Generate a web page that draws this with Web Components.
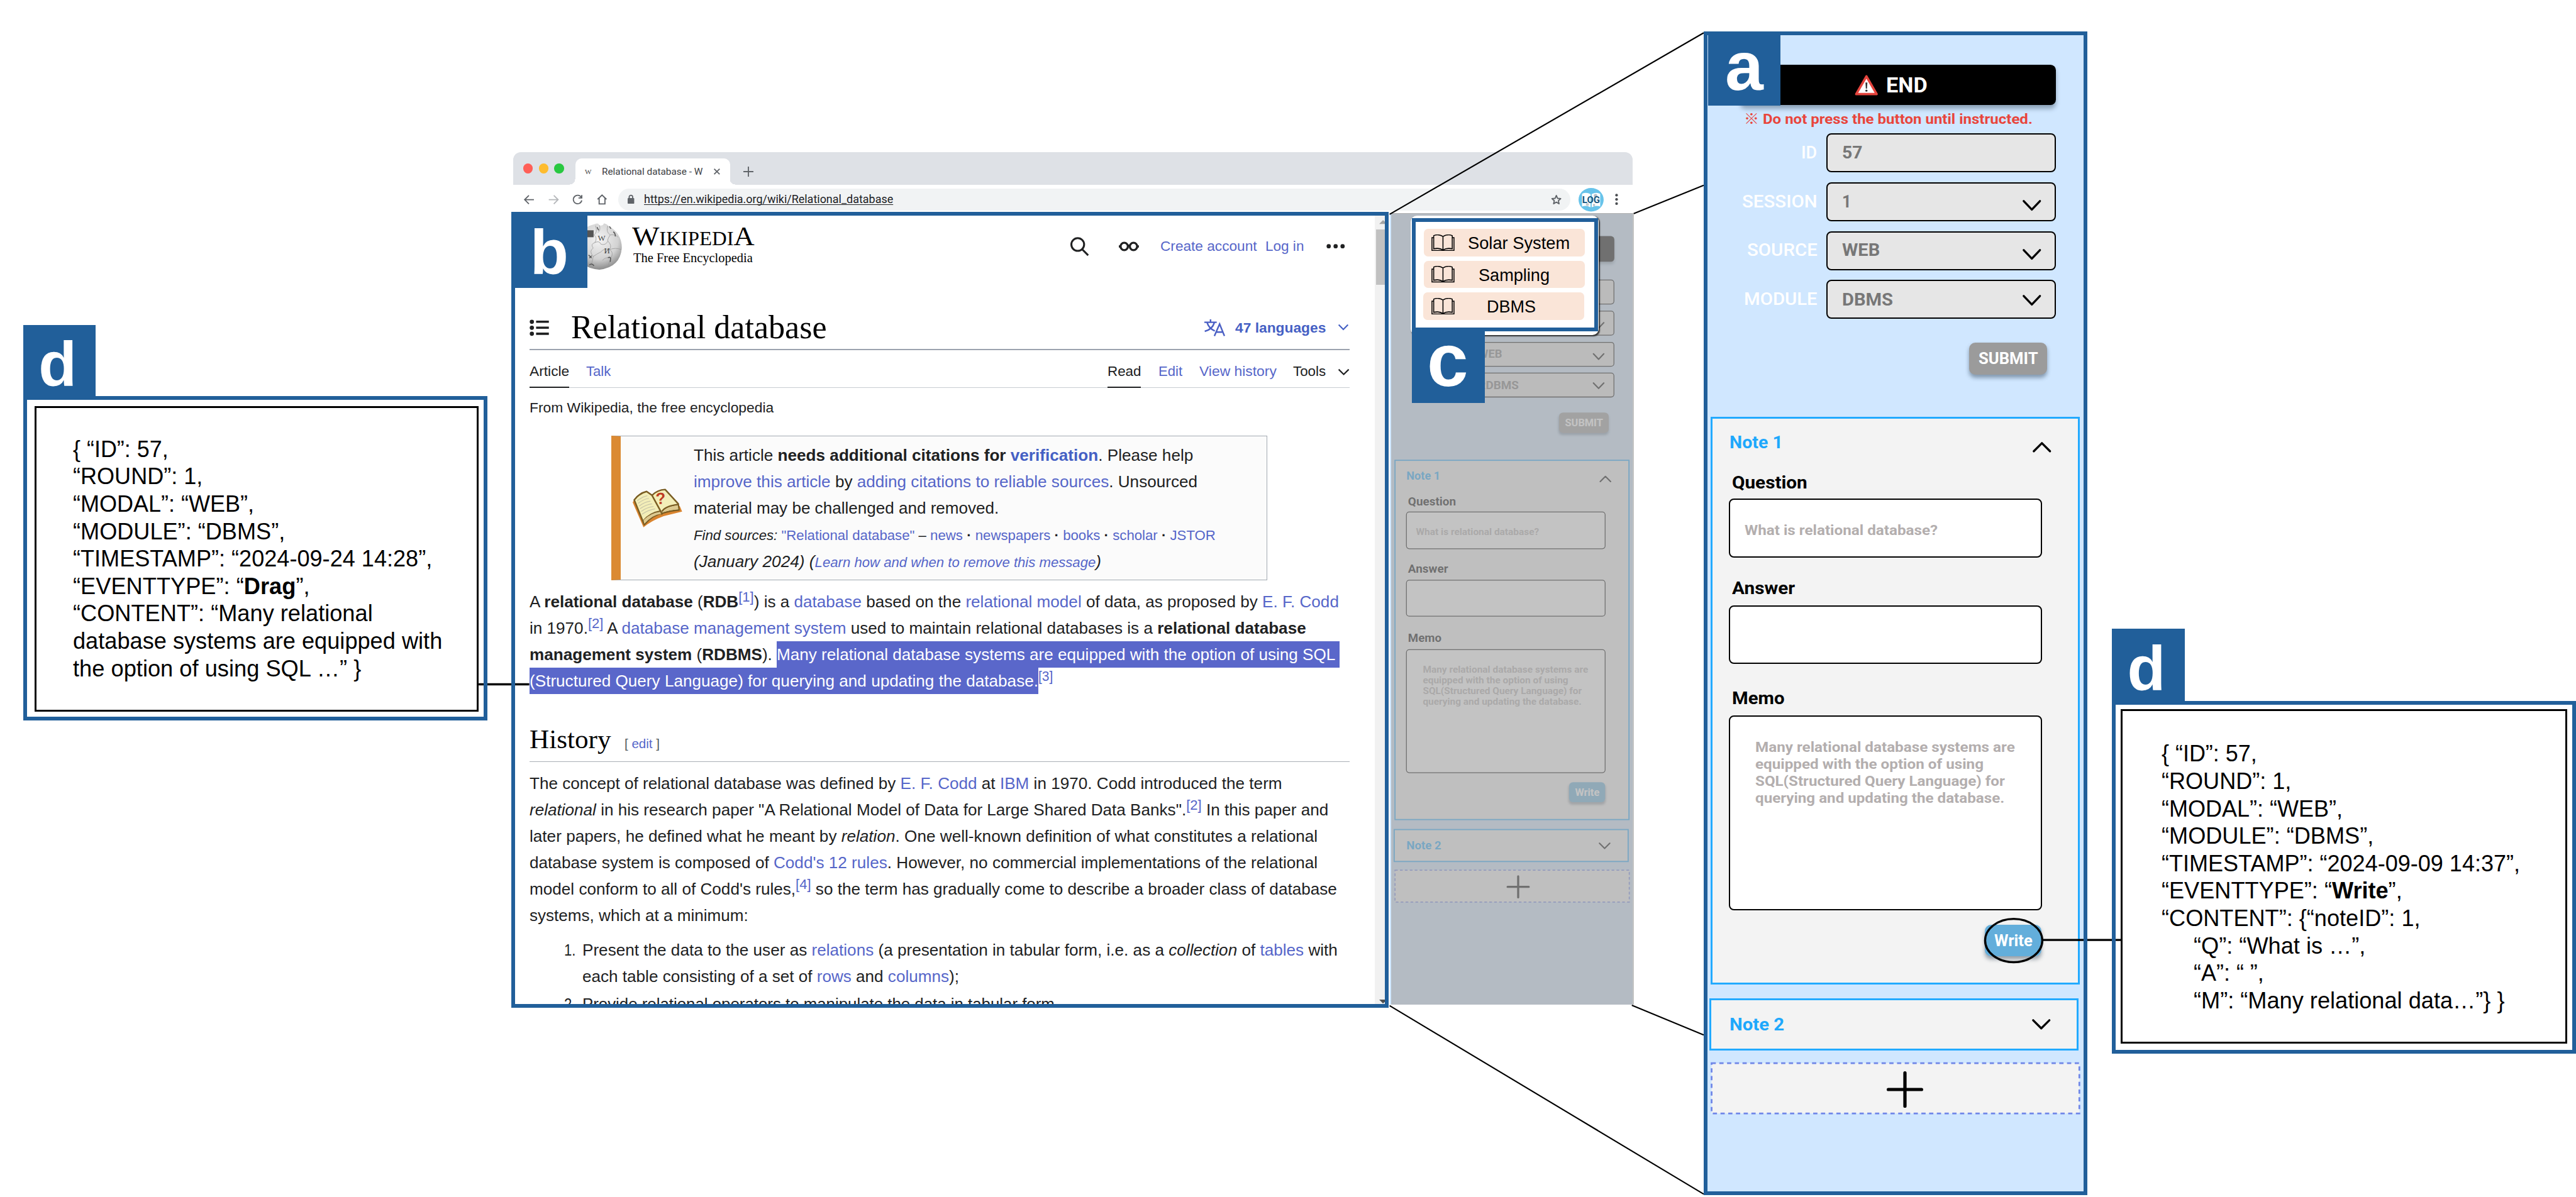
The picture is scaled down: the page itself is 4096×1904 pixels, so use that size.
<!DOCTYPE html>
<html lang="en">
<head>
<meta charset="utf-8">
<title>Logging interface overview</title>
<style>
html,body{margin:0;background:#fff;overflow:hidden}
</style>
</head>
<body>
<figure-canvas></figure-canvas>
<script>
const fits = [];
function define(name, html, setup) {
  const tpl = document.createElement('template');
  tpl.innerHTML = html;
  customElements.define(name, class extends HTMLElement {
    constructor() {
      super();
      this.attachShadow({mode: 'open'}).appendChild(tpl.content.cloneNode(true));
    }
    connectedCallback() {
      if (this.ready) return;
      this.ready = true;
      if (setup) setup(this, this.shadowRoot);
    }
  });
}

/* One line of text set to an exact measure. */
define('fit-text', `
<style>
:host{display:block;flex:none;white-space:nowrap}
span{display:inline-block;transform-origin:0 50%}
</style><span><slot></slot></span>`, (el) => {
  el.style.width = el.getAttribute('w') + 'px';
  fits.push(el);
});

/* Blue badge with a letter. */
define('callout-badge', `
<style>
:host{display:block;position:absolute;background:#215f9a;color:#fff;font:700 162px/162px "Liberation Sans",Arial,sans-serif;width:188px;box-sizing:border-box}
span{display:block;text-align:center}
</style><span><slot></slot></span>`);

define('callout-frame', `
<style>:host{display:block;position:absolute;box-sizing:border-box;border:10px solid #215f9a}</style>`);

/* JSON record card. */
define('log-card', `
<style>
:host{display:flex;position:absolute;box-sizing:border-box;border:10px solid #215f9a;font:59px/71px "Liberation Sans",Arial,sans-serif;color:#000}
.in{flex:1;border:5px solid #000;box-sizing:border-box;margin:var(--gap);padding:var(--pad)}
</style><div class="in"><slot></slot></div>`);

define('chrome-bar', `
<style>
:host{display:block;width:2897px;height:155px;font-family:Roboto,"Liberation Sans",sans-serif;color:#3c4043}
.title{display:flex;height:84px;background:#dee1e6;border-radius:20px 20px 0 0;align-items:flex-end}
.lights{display:flex;gap:15px;margin:0 13px 0 25px;align-self:center}
.lights i{width:25.5px;height:25.5px;border-radius:50%}
.tab{position:relative;display:flex;align-items:center;height:68px;width:400px;background:#fff;border-radius:16px 16px 0 0;box-sizing:border-box;padding-left:23px;font-size:24px;line-height:30px}
.tab:before,.tab:after{content:"";position:absolute;bottom:0;width:14px;height:14px;background:radial-gradient(circle at 0 0,transparent 13.5px,#fff 14px);left:-14px}
.tab:after{left:auto;right:-14px;background:radial-gradient(circle at 100% 0,transparent 13.5px,#fff 14px)}
.fav{font:18px/20px "Liberation Serif",serif;width:20px;color:#444;text-align:center;margin-right:25px}
.tools{display:flex;height:71px;background:#fff;align-items:center;padding-top:6px;box-sizing:border-box}
.nav{display:flex;gap:36px;margin-left:27px}
.nav svg{width:27px;height:27px}
svg{display:block;fill:none;stroke:#5f6368;stroke-width:3;overflow:visible}
.url{display:flex;align-items:center;box-sizing:border-box;margin-left:28px;width:2465px;height:57px;border-radius:29px;background:#f1f3f4;padding:0 24px 0 25px;font-size:30px;line-height:36px;color:#202124}
.url fit-text{margin-left:25px}
u{text-underline-offset:4px;text-decoration-thickness:2px;text-decoration-skip-ink:none}
.sp{flex:1}
</style>
<div class="title">
 <div class="lights"><i style="background:#ff5f57"></i><i style="background:#febc2e"></i><i style="background:#28c840"></i></div>
 <div class="tab" style="margin-left:16px"><span class="fav">W</span><fit-text w="261">Relational database - W</fit-text>
  <svg style="margin-left:29px" width="16" height="16" viewBox="0 0 16 16"><path d="M1 1L15 15M15 1L1 15"/></svg></div>
 <svg style="margin:0 0 21px 35px" width="26" height="26" viewBox="0 0 26 26"><path d="M13 0V26M0 13H26"/></svg>
</div>
<div class="tools">
 <div class="nav">
  <svg viewBox="0 0 27 27"><path d="M26 14H3M13 3L2 14L13 25"/></svg>
  <svg viewBox="0 0 27 27" style="stroke:#b5b7ba"><path d="M1 14H24M14 3L25 14L14 25"/></svg>
  <svg viewBox="0 0 27 27"><path d="M23.500 8.500A11 11 0 1 0 24.500 16M24.500 2V9.500H16"/></svg>
  <svg viewBox="0 0 27 27"><path d="M2 13L13.500 2L25 13M6 10V25H21V10"/></svg>
 </div>
 <div class="url">
  <svg width="17" height="24" viewBox="0 0 17 24"><rect x="0" y="8" width="17" height="15" rx="2" fill="#5f6368" stroke="none"/><path d="M4 9V5.500A4.500 4.500 0 0 1 13 5.500V9"/></svg>
  <fit-text w="645"><u>https://en.wikipedia.org/wiki/Relational_database</u></fit-text>
  <span class="sp"></span>
  <svg width="25" height="25" viewBox="0 0 25 25" stroke-linejoin="round"><path d="M12.500 1.500L15.800 9L23.800 9.700L17.800 15L19.600 23L12.500 18.800L5.400 23L7.200 15L1.200 9.700L9.200 9Z"/></svg>
 </div>
 <svg style="margin-left:22px" width="65" height="61" viewBox="0 0 65 61"><ellipse cx="32.500" cy="30.500" rx="32.500" ry="30.500" fill="#67c3ea" stroke="none"/><path d="M9 15Q20 10 31 16V50Q20 44 9 48ZM56 15Q45 10 34 16V50Q45 44 56 48Z" fill="#fff" stroke="none"/><circle cx="44" cy="20" r="4.500" fill="#b6bec6" stroke="none"/><circle cx="23" cy="43" r="4" fill="#c6c9cc" stroke="none"/><circle cx="40" cy="44" r="3" fill="#b6bec6" stroke="none"/><text x="32.500" y="38.500" textLength="46" lengthAdjust="spacingAndGlyphs" text-anchor="middle" font-family="Roboto,sans-serif" font-weight="700" font-size="23" fill="#14567e" stroke="none">LOG</text></svg>
 <svg style="margin-left:28px" width="8" height="30" viewBox="0 0 8 30"><g fill="#4a4d51" stroke="none"><circle cx="4" cy="4" r="3.500"/><circle cx="4" cy="15" r="3.500"/><circle cx="4" cy="26" r="3.500"/></g></svg>
</div>`);

define('wiki-article', `
<style>
:host{display:flex;box-sizing:border-box;width:2256px;height:2054px;background:#fff;overflow:hidden;color:#202122;font:37px/48px "Liberation Sans",Arial,sans-serif;padding-top:10px}
main{width:2123px;margin-left:41px;flex:none}
a{color:#5666c9}
svg{display:block;flex:none;overflow:visible}
header{display:flex;align-items:center;height:158px}
.word{font-family:"Liberation Serif",serif;color:#000;margin:-7px 0 0 27px}
.sp{flex:1}
.head{display:flex;align-items:center;height:186px;box-sizing:border-box;padding-top:78px}
h1,h2,p,ol{margin:0;font-weight:400}
h1{font:85px/100px "Liberation Serif",serif;color:#000;margin:0 0 4px 58px}
.rule{height:4px;background:#9ca3ae}
nav{display:flex;height:98px;border-bottom:2px solid #c8ccd1;box-sizing:border-box}
nav>*{height:98px;box-sizing:border-box;padding-top:30px}
.on{border-bottom:4px solid #202122}
.amb{display:flex;align-items:center;box-sizing:border-box;margin:48px 0 0 212px;width:1699px;height:375px;border:2px solid #a2a9b1;border-left:26px solid #db8a33;background:#fbfbfb}
.amb,.p{font-size:42.7px}
.amb fit-text{line-height:68.1px}
.p{line-height:68.4px}
.s{font-size:36px}
sup{font-size:36px;line-height:0;vertical-align:14px}
.row{display:flex}
.hl{background:#5a67ca;color:#fff}
h2{display:flex;align-items:baseline;margin-top:77.3px;padding-bottom:17px;border-bottom:3px solid #a9aeb6;font:69px/80px "Liberation Serif",serif;color:#000}
.ed{font:33px/40px "Liberation Sans",sans-serif;margin-left:36px;color:#54595d}
li{display:flex;list-style:none;gap:16px;margin:0 0 4px 91px}
.bar{display:flex;flex-direction:column;width:40px;margin-left:65px;background:#f1f1f1;flex:none}
.thumb{margin:16px 0 0 4px;height:143px;background:#c1c1c1}
</style>
<main>
<header>
 <svg style="margin-left:119px" width="120" height="122" viewBox="0 0 120 122"><defs><radialGradient id="g" cx=".5" cy=".35" r=".7"><stop offset="0" stop-color="#f4f4f4"/><stop offset=".6" stop-color="#d2d2d2"/><stop offset="1" stop-color="#7c7c7c"/></radialGradient></defs>
 <path d="M50 4Q60 0 62 7Q70 10 74 2Q82 4 84 8Q120 26 120 66Q116 116 62 122Q4 118 0 62Q2 16 50 4Z" fill="url(#g)"/><path d="M30 20H47V38H30Z" fill="#555"/>
 <g fill="none" stroke="#999" stroke-width="1.300"><path d="M52 8Q58 26 48 32Q58 40 50 52Q38 56 46 66Q34 74 46 88L40 116M50 52Q62 46 66 56Q78 60 84 48M84 8Q78 24 90 32Q82 44 84 48Q96 60 88 70Q100 76 92 92L84 112M88 70Q74 66 66 76Q54 82 46 88M92 92Q78 88 70 98M62 7Q66 20 58 26M90 32Q104 30 110 38M88 70Q104 64 119 70"/></g>
 <g fill="#444" font-family="Liberation Serif,serif" font-size="21"><text x="58" y="48">W</text><text x="74" y="80">И</text></g><path d="M84 91Q90 88 91 93L90 102M98 24Q104 28 103 36M34 84L42 92M36 92L42 86M36 110Q42 104 48 112M56 12L60 20M88 10L92 16" fill="none" stroke="#555" stroke-width="2.500"/></svg>
 <div class="word">
  <fit-text w="317" style="font-size:70px;line-height:60px">W<span style="font-size:50px">IKIPEDI</span>A</fit-text>
  <fit-text w="309" style="font-size:35px;line-height:34px;margin:2px 0 0 3px">The Free Encyclopedia</fit-text>
 </div>
 <span class="sp"></span>
 <svg width="48" height="52" viewBox="0 0 48 52" fill="none" stroke="#202122" stroke-width="5"><circle cx="19" cy="21" r="16.500"/><path d="M30 33L46 49"/></svg>
 <svg style="margin-left:78px" width="52" height="26" viewBox="0 0 52 26" fill="none" stroke="#202122" stroke-width="5.500"><circle cx="14" cy="13" r="9.500"/><circle cx="38" cy="13" r="9.500"/><path d="M0 13H4M48 13H52M24 11H28" /></svg>
 <fit-text w="250" style="margin-left:55px"><a>Create account</a></fit-text>
 <fit-text w="100" style="margin-left:23px"><a>Log in</a></fit-text>
 <svg style="margin:0 12px 0 57px" width="48" height="12" viewBox="0 0 48 12" fill="#202122"><circle cx="6" cy="6" r="5.500"/><circle cx="24" cy="6" r="5.500"/><circle cx="42" cy="6" r="5.500"/></svg>
</header>
<div class="head">
 <svg width="50" height="40" viewBox="0 0 50 40" style="margin-left:1px" fill="#202122"><circle cx="6" cy="4.500" r="5.500"/><circle cx="6" cy="20" r="5.500"/><circle cx="6" cy="35.500" r="5.500"/><path d="M17 1.500H50V7.500H17ZM17 17H50V23H17ZM17 32.500H50V38.500H17Z"/></svg>
 <h1><fit-text w="662">Relational database</fit-text></h1>
 <span class="sp"></span>
 <svg width="53" height="44" viewBox="0 0 53 44" fill="none" stroke="#4a5fc4" stroke-width="4"><path d="M0 7.500H32M16 0V7M7 8Q12 24 27 30M26 8Q21 26 1 31M26 43L39.500 12L52 43M31 33H47"/></svg>
 <fit-text w="235" style="margin-left:27px;font-weight:700"><a style="color:#4560c4">47 languages</a></fit-text>
 <svg style="margin:-2px 2px 0 33px" width="26" height="15" viewBox="0 0 26 15" fill="none" stroke="#4560c4" stroke-width="3.500"><path d="M1 1L13 13L25 1"/></svg>
</div>
<div class="rule"></div>
<nav>
 <div class="on"><fit-text w="103">Article</fit-text></div>
 <div style="margin-left:45px"><fit-text w="64"><a>Talk</a></fit-text></div>
 <span class="sp"></span>
 <div class="on"><fit-text w="87">Read</fit-text></div>
 <div style="margin-left:45px"><fit-text w="62"><a>Edit</a></fit-text></div>
 <div style="margin-left:44px"><fit-text w="200"><a>View history</a></fit-text></div>
 <div style="margin-left:43px"><fit-text w="85">Tools</fit-text></div>
 <div style="margin:18px 1px 0 32px"><svg width="28" height="16" viewBox="0 0 28 16" fill="none" stroke="#202122" stroke-width="3.500"><path d="M1 1L14 14L27 1"/></svg></div>
</nav>
<fit-text w="632" style="margin-top:27px">From Wikipedia, the free encyclopedia</fit-text>
<div class="amb">
 <svg style="margin:0 31px" width="128" height="99" viewBox="0 0 128 99" stroke-linejoin="round"><path d="M0 34L28 99Q48 82 80 70L128 58L122 44L4 28Z" fill="#d9842f"/><path d="M4 28Q18 10 36 6L50 16Q64 2 84 1L118 38L120 54Q96 56 78 62Q52 66 30 92Z" fill="#f3eeb8" stroke="#7a5d23" stroke-width="4"/><path d="M50 16L74 60M28 82Q44 62 72 57M76 58Q84 44 118 40M74 60L76 66" fill="none" stroke="#7a5d23" stroke-width="4"/><path d="M30 90Q31 84 28 80Q46 62 70 59L74 64Q52 66 30 90ZM78 60Q86 47 117 42L118 52Q96 54 78 60Z" fill="#dcc98f"/><path d="M12 30Q24 20 38 17M14 37Q28 26 42 24M17 44Q30 33 46 31M19 51Q34 40 50 38M22 58Q36 47 54 45M24 65Q40 54 58 51" stroke="#c9c6a8" stroke-width="2" fill="none"/><text x="60" y="39" transform="rotate(-4 70 30)" font-family="Liberation Sans,sans-serif" font-weight="700" font-size="42" fill="#bf3b22">?</text></svg>
 <div style="padding-top:6px">
  <fit-text w="1293">This article <b>needs additional citations for <a style="color:#4560c4">verification</a></b>. Please help</fit-text>
  <fit-text w="1304"><a>improve this article</a> by <a>adding citations to reliable sources</a>. Unsourced</fit-text>
  <fit-text w="790">material may be challenged and removed.</fit-text>
  <fit-text w="1351"><span class="s"><i>Find sources:</i> <a>"Relational database"</a> – <a>news</a> <b>·</b> <a>newspapers</a> <b>·</b> <a>books</a> <b>·</b> <a>scholar</a> <b>·</b> <a>JSTOR</a></span></fit-text>
  <fit-text w="1055"><i>(January 2024) (<a class="s">Learn how and when to remove this message</a>)</i></fit-text>
 </div>
</div>
<div class="p" style="margin-top:20.8px">
 <fit-text w="2095">A <b>relational database</b> (<b>RDB</b><sup><a>[1]</a></sup>) is a <a>database</a> based on the <a>relational model</a> of data, as proposed by <a>E. F. Codd</a></fit-text>
 <fit-text w="2010">in 1970.<sup><a>[2]</a></sup> A <a>database management system</a> used to maintain relational databases is a <b>relational database</b></fit-text>
 <div class="row"><fit-text w="640"><b>management system</b> (<b>RDBMS</b>).&nbsp;</fit-text><fit-text class="hl" w="1458">Many relational database systems are equipped with the option of using SQL&nbsp;</fit-text></div>
 <div class="row"><fit-text class="hl" w="1317">(Structured Query Language) for querying and updating the database.</fit-text><fit-text w="38"><sup><a>[3]</a></sup></fit-text></div>
</div>
<h2><fit-text w="211">History</fit-text><fit-text class="ed" w="91">[ <a>edit</a> ]</fit-text></h2>
<div class="p" style="margin-top:21px">
 <fit-text w="1948">The concept of relational database was defined by <a>E. F. Codd</a> at <a>IBM</a> in 1970. Codd introduced the term</fit-text>
 <fit-text w="2068"><i>relational</i> in his research paper "A Relational Model of Data for Large Shared Data Banks".<sup><a>[2]</a></sup> In this paper and</fit-text>
 <fit-text w="2040">later papers, he defined what he meant by <i>relation</i>. One well-known definition of what constitutes a relational</fit-text>
 <fit-text w="2040">database system is composed of <a>Codd's 12 rules</a>. However, no commercial implementations of the relational</fit-text>
 <fit-text w="2090">model conform to all of Codd's rules,<sup><a>[4]</a></sup> so the term has gradually come to describe a broader class of database</fit-text>
 <fit-text w="566">systems, which at a minimum:</fit-text>
</div>
<ol class="p" style="margin-top:21px;padding:0">
 <li><fit-text w="30">1.</fit-text><div><fit-text w="1955">Present the data to the user as <a>relations</a> (a presentation in tabular form, i.e. as a <i>collection</i> of <a>tables</a> with</fit-text><fit-text w="975">each table consisting of a set of <a>rows</a> and <a>columns</a>);</fit-text></div></li>
 <li><fit-text w="30">2.</fit-text><fit-text w="1234">Provide relational operators to manipulate the data in tabular form.</fit-text></li>
</ol>
</main>
<div class="bar">
 <svg style="margin:10px 0 0 12px" width="20" height="10" viewBox="0 0 20 10" fill="#a3a3a3"><path d="M0 10L10 0L20 10Z"/></svg>
 <div class="thumb"></div><span class="sp"></span>
 <svg style="margin:0 0 4px 12px" width="20" height="10" viewBox="0 0 20 10" fill="#505050"><path d="M0 0L10 10L20 0Z"/></svg>
</div>`);

/* Experiment side panel; "module" sets the selected module and marks the panel that sits behind the menu. */
define('session-panel', `
<style>
:host{display:flow-root;width:973px;font:700 46px/56px Roboto,"Noto Sans CJK JP",sans-serif}
:host([module]) :is(.end fit-text,.end svg,.warn,.lab,.behind){visibility:hidden}
svg{display:block;flex:none;overflow:visible}
.chev{fill:none;stroke:#000;stroke-width:5.5;stroke-linecap:round;stroke-linejoin:round}
.end{display:flex;align-items:center;gap:22px;box-sizing:border-box;margin:76px 0 0 84px;width:818px;height:105px;padding:3px 0 0 296px;background:#000;color:#fff;border-radius:14px;font-size:55px;box-shadow:0 9px 12px rgba(40,60,80,.4)}
.warn{font-size:37px;line-height:44px;color:#e8453c;margin:14px 0 15px 95px}
.f{display:flex;align-items:center;height:101px;margin-bottom:25.700px}
.lab{width:284px;display:flex;justify-content:flex-end;color:#fff;margin-right:24px;font-weight:500}
.box{display:flex;align-items:center;justify-content:space-between;box-sizing:border-box;width:594px;height:101px;border:4px solid #000;border-radius:13px;background:#e6e6e6;color:#777;padding:0 36px 0 37px}
.btn{display:flex;align-items:center;justify-content:center;border-radius:16px;color:#fff;font-size:42px;box-shadow:0 8px 10px rgba(40,60,80,.45)}
.submit{width:202px;height:83px;background:#9b9b9b;margin:61px 94px 0 auto}
.note{box-sizing:border-box;border:5px solid #22aaff;background:#f3f3f3}
.n1{width:956px;height:1470px;margin:110px 0 0 8px;padding:34px 0 0 42px}
.hd{display:flex;justify-content:space-between;color:#1ea8fc}
.n1 .hd{padding:0 69px 0 2px}
.l{color:#000;margin-left:8px;position:relative;top:2px}
.in{box-sizing:border-box;width:811.5px;border:4px solid #000;border-radius:13px;background:#fff;color:#b3aeae;font-size:37px;line-height:44.3px}
.write{width:146px;height:82px;background:#63aedb;margin:38px 95px 0 auto}
.n2{display:flex;align-items:center;width:956px;height:135.500px;margin:35.500px 0 0 5px;padding:0 69px 0 47px}
.n2 .hd{flex:1;align-items:center}
.add{margin:30px 0 0 8px}
</style>
<div class="end"><svg width="61" height="54" viewBox="0 0 61 54"><path d="M30.500 4L57 50H4Z" fill="#fff" stroke="#e5443d" stroke-width="6" stroke-linejoin="round"/><path d="M28 20H33L32 36H29Z" fill="#333"/><circle cx="30.500" cy="41" r="2.700" fill="#333"/></svg><fit-text w="107">END</fit-text></div>
<fit-text class="warn" w="747">※ Do not press the button until instructed.</fit-text>
<div class="f"><div class="lab"><fit-text w="41">ID</fit-text></div><div class="box"><fit-text class="behind" w="53">57</fit-text></div></div>
<div class="f"><div class="lab"><fit-text w="195">SESSION</fit-text></div><div class="box"><fit-text class="behind" w="24">1</fit-text><svg class="chev" style="margin-top:19px" width="48" height="28" viewBox="0 0 48 28"><path d="M3 3L24 25L45 3"/></svg></div></div>
<div class="f"><div class="lab"><fit-text w="182">SOURCE</fit-text></div><div class="box"><fit-text w="98">WEB</fit-text><svg class="chev" style="margin-top:20px" width="48" height="28" viewBox="0 0 48 28"><path d="M3 3L24 25L45 3"/></svg></div></div>
<div class="f" style="margin:0"><div class="lab"><fit-text w="190">MODULE</fit-text></div><div class="box"><fit-text class="mod" w="132" style="padding-top:4px">DBMS</fit-text><svg class="chev" style="margin-top:4px" width="48" height="28" viewBox="0 0 48 28"><path d="M3 3L24 25L45 3"/></svg></div></div>
<div class="btn submit"><fit-text w="154">SUBMIT</fit-text></div>
<div class="note n1">
 <div class="hd"><fit-text w="138">Note 1</fit-text><svg class="chev" style="margin-top:26px" width="48" height="27" viewBox="0 0 48 27"><path d="M3 24L24 3L45 24"/></svg></div>
 <fit-text class="l" style="margin-top:46.600px" w="195">Question</fit-text>
 <div class="in" style="margin-top:13.800px;height:153px;padding:56px 0 0 38px"><fit-text w="500">What is relational database?</fit-text></div>
 <fit-text class="l" style="margin-top:50.600px" w="163">Answer</fit-text>
 <div class="in" style="margin-top:17.700px;height:150px"></div>
 <fit-text class="l" style="margin-top:59.800px" w="136">Memo</fit-text>
 <div class="in" style="margin-top:18.700px;height:503.500px;padding:56px 0 0 66px"><fit-text w="672">Many relational database systems are</fit-text><fit-text w="591">equipped with the option of using</fit-text><fit-text w="646">SQL(Structured Query Language) for</fit-text><fit-text w="645">querying and updating the database.</fit-text></div>
 <div class="btn write"><fit-text w="99">Write</fit-text></div>
</div>
<div class="note n2"><div class="hd"><fit-text w="142">Note 2</fit-text><svg class="chev" width="48" height="27" viewBox="0 0 48 27"><path d="M3 3L24 24L45 3"/></svg></div></div>
<svg class="add" width="957" height="134" viewBox="0 0 957 134"><rect x="2.500" y="2" width="952" height="130" fill="#f3f3f3" stroke="#6f86e8" stroke-width="4.500" stroke-dasharray="11 9"/><path d="M460 70H546M503 27V113" stroke="#000" stroke-width="8.500" stroke-linecap="round"/></svg>`,
(el, root) => { if (el.hasAttribute('module')) { const m = root.querySelector('.mod'); m.textContent = el.getAttribute('module'); m.setAttribute('w', el.getAttribute('module-width')); m.style.width = el.getAttribute('module-width') + 'px'; } });

define('browser-window', `
<style>
:host{display:block;position:absolute;left:1329px;top:394px;width:2901px}
.row{display:flex}
.side{position:relative;margin:3px 0 0 13px;width:632px;height:2049px;overflow:hidden;background:linear-gradient(90deg,#d0e7ff 628px,#fff 628px)}
.side:after{content:"";position:absolute;inset:0 0 0 3px;background:rgba(166,166,166,.675);border-top:2px solid #b0b0b0}
session-panel{margin:0 0 0 5.500px;transform-origin:0 0;transform:translateY(11px) scale(.637,.635)}
</style>
<chrome-bar></chrome-bar>
<div class="row"><wiki-article></wiki-article><div class="side"><session-panel module="RDBMS" module-width="165"></session-panel></div></div>`);

/* Module picker menu. */
define('module-menu', `
<style>
:host{display:flex;flex-direction:column;gap:11px;position:absolute;left:3651px;top:559px;width:487px;height:309px;box-sizing:border-box;padding:34px 0 0 35px;background:#fff;border-radius:16px;box-shadow:2px 3px 3px rgba(0,0,0,.7);font:46px/71px "Liberation Sans",Arial,sans-serif;color:#000}
div{display:flex;align-items:center;width:416px;height:71px;border-radius:11px;background:#fae5d8}
svg{display:block;flex:none;margin-left:19px;fill:none;stroke:#000;stroke-width:2.500}
</style>
<div><svg width="60" height="43" viewBox="0 0 60 43"><path d="M30 5Q17 -2 6 3V37Q20 34 30 40Q40 34 54 37V3Q43 -2 30 5V40M6 8H1.500V41.500H58.500V8H54"/></svg><fit-text w="264" style="margin:2px 0 0 34px">Solar System</fit-text></div>
<div><svg width="60" height="43" viewBox="0 0 60 43"><path d="M30 5Q17 -2 6 3V37Q20 34 30 40Q40 34 54 37V3Q43 -2 30 5V40M6 8H1.500V41.500H58.500V8H54"/></svg><fit-text w="184" style="margin:4px 0 0 62px">Sampling</fit-text></div>
<div style="margin-left:-2px"><svg style="margin-left:21px" width="60" height="43" viewBox="0 0 60 43"><path d="M30 5Q17 -2 6 3V37Q20 34 30 40Q40 34 54 37V3Q43 -2 30 5V40M6 8H1.500V41.500H58.500V8H54"/></svg><fit-text w="127" style="margin:3px 0 0 83px">DBMS</fit-text></div>`);

define('figure-canvas', `
<style>
:host{display:block;position:relative;width:6668px;height:3099px;zoom:.614279;overflow:hidden;background:#fff}
.links{position:absolute;left:0;top:0;width:6668px;height:3099px;fill:none;stroke:#000;stroke-width:3.5}
.zoomed{position:absolute;left:4410px;top:81px;width:993px;height:3014px;box-sizing:border-box;padding:10px;background:#d0e7ff}
log-card{z-index:1}
</style>
<browser-window></browser-window>
<div class="zoomed"><session-panel></session-panel></div>
<svg class="links" viewBox="0 0 6668 3099"><path d="M3597 555L4410 85M4229 553L4410 480M3597 2604L4410 3092M4224 2603L4410 2680"/><path d="M1239 1772H1370M5286 2434H5492" stroke-width="5.500"/><ellipse cx="5212.500" cy="2435.500" rx="74" ry="56" stroke-width="5.500"/></svg>
<module-menu></module-menu>
<callout-frame style="left:3655px;top:565px;width:482px;height:293px"></callout-frame>
<callout-badge style="left:3655px;top:857px;height:186px;font-size:192px;line-height:154px;padding-right:4px">c</callout-badge>
<callout-frame style="left:1324px;top:549px;width:2271px;height:2060px"></callout-frame>
<callout-badge style="left:1324px;top:549px;width:196px;height:197px;line-height:213px">b</callout-badge>
<callout-frame style="left:4410px;top:81px;width:993px;height:3014px"></callout-frame>
<callout-badge style="left:4421px;top:81px;height:193px;font-size:178px;line-height:181px">a</callout-badge>
<log-card style="left:60px;top:1026px;width:1201px;height:840px;--gap:16px 12px 14px 19px;--pad:71px 0 0 95px">
 <fit-text w="247">{ “ID”: 57,</fit-text>
 <fit-text w="336">“ROUND”: 1,</fit-text>
 <fit-text w="469">“MODAL”: “WEB”,</fit-text>
 <fit-text w="549">“MODULE”: “DBMS”,</fit-text>
 <fit-text w="930">“TIMESTAMP”: “2024-09-24 14:28”,</fit-text>
 <fit-text w="613">“EVENTTYPE”: “<b>Drag</b>”,</fit-text>
 <fit-text w="776">“CONTENT”: “Many relational</fit-text>
 <fit-text w="956">database systems are equipped with</fit-text>
 <fit-text w="746">the option of using SQL …” }</fit-text>
</log-card>
<callout-badge style="left:60px;top:841px;height:187px;line-height:205px;padding-right:10px">d</callout-badge>
<log-card style="left:5467px;top:1815px;width:1201px;height:913px;--gap:12px 13px 16px 13px;--pad:75px 0 0 101px">
 <fit-text w="247">{ “ID”: 57,</fit-text>
 <fit-text w="336">“ROUND”: 1,</fit-text>
 <fit-text w="469">“MODAL”: “WEB”,</fit-text>
 <fit-text w="549">“MODULE”: “DBMS”,</fit-text>
 <fit-text w="928">“TIMESTAMP”: “2024-09-09 14:37”,</fit-text>
 <fit-text w="623">“EVENTTYPE”: “<b>Write</b>”,</fit-text>
 <fit-text w="670">“CONTENT”: {“noteID”: 1,</fit-text>
 <fit-text w="445" style="margin-left:82px">“Q”: “What is …”,</fit-text>
 <fit-text w="182" style="margin-left:82px">“A”: “ ”,</fit-text>
 <fit-text w="805" style="margin-left:82px">“M”: “Many relational data…”} }</fit-text>
</log-card>
<callout-badge style="left:5467px;top:1628px;height:189px;line-height:208px;padding-right:10px">d</callout-badge>`);

for (const el of fits) {
  const s = el.shadowRoot.querySelector('span');
  const k = el.getBoundingClientRect().width / s.getBoundingClientRect().width;
  s.style.transform = 'scaleX(' + k + ')';
}
</script>
</body>
</html>
